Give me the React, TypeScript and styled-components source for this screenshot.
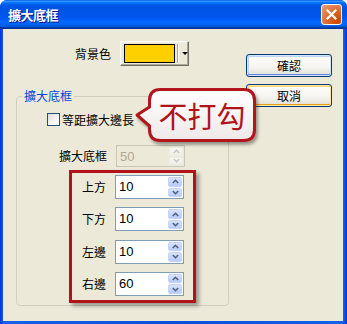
import React from 'react';
import styled, { createGlobalStyle } from 'styled-components';

const Global = createGlobalStyle`
  html, body { margin: 0; padding: 0; background: #ffffff; }
  body {
    width: 347px; height: 324px; overflow: hidden;
    font-family: "Noto Sans CJK TC", "Noto Sans", sans-serif;
    font-size: 12px; color: #000;
  }
`;

const Window = styled.div`
  box-sizing: border-box;
  width: 347px;
  height: 324px;
  display: flex;
  flex-direction: column;
  background: linear-gradient(to right, #0831d9 0%, #1660e8 1%, #0a4fdc 50%, #1660e8 99%, #0831d9 100%);
  border-radius: 7px 7px 0 0;
  overflow: hidden;
  padding: 0 4px 3px 3px;
`;

const TitleBar = styled.div`
  height: 29px;
  margin: 0 -4px 0 -3px;
  flex: none;
  display: flex;
  align-items: center;
  justify-content: space-between;
  padding: 0 5px 0 8px;
  background: linear-gradient(to bottom, #0058ee 0%, #3593ff 4%, #288eff 6%, #127dff 8%, #036ffc 10%, #0262ee 14%, #0057e5 20%, #0054e3 24%, #0055eb 56%, #005bf5 66%, #026afe 76%, #0062ef 86%, #0052d6 92%, #0040ab 94%, #003092 100%);
`;

const Title = styled.span`
  color: #fff;
  font-weight: bold;
  font-size: 13px;
  letter-spacing: -0.5px;
  text-shadow: 1px 1px 0 #0f1089;
`;

const CloseButton = styled.div`
  box-sizing: border-box;
  width: 21px;
  height: 21px;
  border: 1px solid #fff;
  border-radius: 3px;
  background: radial-gradient(circle at 85% 85%, #cc4600 0%, #dc6527 45%, #e98b60 80%, #f0a387 100%);
  display: flex;
  align-items: center;
  justify-content: center;
`;

const Body = styled.div`
  position: relative;
  flex: 1;
  background: #ece9d8;
  display: flex;
  gap: 17px;
  padding: 12px 0 0 13px;
`;

const LeftCol = styled.div`
  width: 213px;
  display: flex;
  flex-direction: column;
`;

const RightCol = styled.div`
  display: flex;
  flex-direction: column;
  gap: 7px;
  padding-top: 13px;
`;

const PushButton = styled.div<{ $glow: 'focus' | 'hover' }>`
  box-sizing: border-box;
  width: 86px;
  height: 23px;
  border: 1px solid #003c74;
  border-radius: 3px;
  background: linear-gradient(to bottom, #ffffff 0%, #f5f4ef 60%, #e6e3d6 90%, #d6d0c5 100%);
  box-shadow: ${p => p.$glow === 'focus'
    ? 'inset 0 0 0 1px #cee7ff, inset 0 -1px 0 1px #6982ee, inset 1px 1px 0 1px #bcd4f6'
    : 'inset 0 0 0 1px #ffe7a2, inset 0 -1px 0 1px #e5a01a, inset 1px 1px 0 1px #fad47b'};
  display: flex;
  align-items: center;
  justify-content: center;
  font-size: 12px;
`;

const Row = styled.div<{ $labelW: number; $h: number }>`
  display: grid;
  grid-template-columns: ${p => p.$labelW}px 69px;
  column-gap: 9px;
  align-items: center;
  height: ${p => p.$h}px;
`;

const Label = styled.span`
  text-align: right;
  font-size: 12px;
  line-height: 14px;
  white-space: nowrap;
`;

const ColorButton = styled.div`
  box-sizing: border-box;
  width: 69px;
  height: 25px;
  border: 1px solid;
  border-color: #ffffff #716f64 #716f64 #ffffff;
  box-shadow: inset -1px -1px 0 #aca899, inset 1px 1px 0 #f1efe2;
  background: #ece9d8;
  display: flex;
  align-items: center;
  padding: 0 0 0 3px;
`;

const Swatch = styled.div<{ $color: string }>`
  box-sizing: border-box;
  width: 52px;
  height: 19px;
  border: 1px solid #000;
  background: ${p => p.$color};
`;

const Separator = styled.div`
  width: 1px;
  height: 19px;
  margin-left: 2px;
  background: #aca899;
  border-right: 1px solid #fff;
`;

const Arrow = styled.div`
  margin-left: 3px;
  width: 0;
  height: 0;
  border-left: 3px solid transparent;
  border-right: 3px solid transparent;
  border-top: 3px solid #000;
`;

const Group = styled.fieldset`
  margin: 23px 0 0 0;
  padding: 0 0 2px 0;
  border: 1px solid #d0d0bf;
  border-radius: 4px;
  min-width: 0;
  display: flex;
  flex-direction: column;
`;

const Legend = styled.legend`
  margin-left: 5px;
  padding: 0 2px;
  color: #0046d5;
  font-size: 12px;
  line-height: 14px;
`;

const CheckRow = styled.label`
  display: flex;
  align-items: center;
  gap: 2px;
  height: 13px;
  margin: 10px 0 0 30px;
  font-size: 12px;
`;

const CheckBox = styled.span`
  box-sizing: border-box;
  width: 13px;
  height: 13px;
  border: 1px solid #1c5180;
  background: linear-gradient(135deg, #dcdcd7 0%, #f2f2ee 50%, #ffffff 100%);
`;

const DisabledRow = styled.div`
  margin: 19px 0 0 0;
`;

const RedBox = styled.div`
  box-sizing: border-box;
  width: 127px;
  margin: 3px 0 0 52px;
  border: 3px solid #b0141a;
  padding: 2px 7px 4px 0;
  display: flex;
  flex-direction: column;
  gap: 8.3px;
  box-shadow: 3px 3px 4px rgba(0, 0, 0, 0.35);
`;

const Field = styled.div<{ $disabled?: boolean; $h: number }>`
  box-sizing: border-box;
  width: 69px;
  height: ${p => p.$h}px;
  border: 1px solid ${p => (p.$disabled ? '#c9c7ba' : '#7f9db9')};
  background: ${p => (p.$disabled ? '#ece9d8' : '#ffffff')};
  display: flex;
  padding: 1px 1px 1px 0;
`;

const Value = styled.span<{ $disabled?: boolean }>`
  flex: 1;
  font-family: "Liberation Sans", Arial, sans-serif;
  font-size: 13px;
  line-height: 15px;
  padding: 2px 0 0 3px;
  color: ${p => (p.$disabled ? '#aca899' : '#000')};
`;

const Spin = styled.div`
  width: 14px;
  display: flex;
  flex-direction: column;
  gap: 1px;
`;

const SpinBtn = styled.div<{ $disabled?: boolean }>`
  flex: 1;
  box-sizing: border-box;
  border-radius: 2px;
  border: 1px solid ${p => (p.$disabled ? '#eeede5' : '#c3d3fd')};
  background: ${p => (p.$disabled ? 'linear-gradient(#f7f7f4, #efeee6)' : 'linear-gradient(#d9e3fd, #b6cbf7)')};
  display: flex;
  align-items: center;
  justify-content: center;
`;

const Callout = styled.div`
  position: absolute;
  left: 131px;
  top: 57px;
  width: 130px;
  height: 64px;
  z-index: 2;
`;

const CalloutText = styled.span`
  position: absolute;
  left: 14px;
  top: 2px;
  width: 108px;
  height: 54px;
  display: flex;
  align-items: center;
  justify-content: center;
  color: #b0141a;
  font-size: 29px;
  line-height: 30px;
  letter-spacing: 0px;
`;

const Chevron: React.FC<{ up?: boolean; color: string }> = ({ up, color }) => (
  <svg width="7" height="5" viewBox="0 0 7 5">
    <path d={up ? 'M0.8 4 L3.5 1.3 L6.2 4' : 'M0.8 1 L3.5 3.7 L6.2 1'} fill="none" stroke={color} strokeWidth="1.6" />
  </svg>
);

const SpinField: React.FC<{ value: string; disabled?: boolean; h: number }> = ({ value, disabled, h }) => {
  const c = disabled ? '#c9c7ba' : '#4d6185';
  return (
    <Field $disabled={disabled} $h={h}>
      <Value $disabled={disabled}>{value}</Value>
      <Spin>
        <SpinBtn $disabled={disabled}><Chevron up color={c} /></SpinBtn>
        <SpinBtn $disabled={disabled}><Chevron color={c} /></SpinBtn>
      </Spin>
    </Field>
  );
};

const sides = [
  { label: '上方', value: '10' },
  { label: '下方', value: '10' },
  { label: '左邊', value: '10' },
  { label: '右邊', value: '60' },
];

export default function App() {
  return (
    <>
      <Global />
      <Window>
        <TitleBar>
          <Title>擴大底框</Title>
          <CloseButton>
            <svg width="11" height="11" viewBox="0 0 11 11">
              <path d="M1.5 1.5 L9.5 9.5 M9.5 1.5 L1.5 9.5" stroke="#fff" strokeWidth="2.2" strokeLinecap="square" />
            </svg>
          </CloseButton>
        </TitleBar>
        <Body>
          <LeftCol>
            <Row $labelW={95} $h={25}>
              <Label>背景色</Label>
              <ColorButton>
                <Swatch $color="#ffd000" />
                <Separator />
                <Arrow />
              </ColorButton>
            </Row>
            <Group>
              <Legend>擴大底框</Legend>
              <CheckRow>
                <CheckBox />
                <span>等距擴大邊長</span>
              </CheckRow>
              <DisabledRow>
                <Row $labelW={90} $h={22}>
                  <Label>擴大底框</Label>
                  <SpinField value="50" disabled h={22} />
                </Row>
              </DisabledRow>
              <RedBox>
                {sides.map(s => (
                  <Row key={s.label} $labelW={34} $h={24}>
                    <Label>{s.label}</Label>
                    <SpinField value={s.value} h={24} />
                  </Row>
                ))}
              </RedBox>
            </Group>
          </LeftCol>
          <RightCol>
            <PushButton $glow="focus">確認</PushButton>
            <PushButton $glow="hover">取消</PushButton>
          </RightCol>
          <Callout>
            <svg width="130" height="64" viewBox="0 0 130 64" style={{ position: 'absolute', left: 0, top: 0, overflow: 'visible' }}>
              <defs>
                <linearGradient id="cg" x1="0" y1="0" x2="0" y2="1">
                  <stop offset="0" stopColor="#ffffff" />
                  <stop offset="1" stopColor="#efe9e9" />
                </linearGradient>
                <filter id="cs" x="-20%" y="-20%" width="150%" height="160%">
                  <feDropShadow dx="2" dy="3" stdDeviation="1.6" floodColor="#000" floodOpacity="0.35" />
                </filter>
              </defs>
              <path
                d="M26.5 3.5 H109.5 Q120.5 3.5 120.5 14.5 V43.5 Q120.5 54.5 109.5 54.5 H26.5 Q15.5 54.5 15.5 43.5 V40 L3 29 L15.5 21 V14.5 Q15.5 3.5 26.5 3.5 Z"
                fill="url(#cg)"
                stroke="#b0141a"
                strokeWidth="3"
                strokeLinejoin="round"
                filter="url(#cs)"
              />
            </svg>
            <CalloutText>不打勾</CalloutText>
          </Callout>
        </Body>
      </Window>
    </>
  );
}
